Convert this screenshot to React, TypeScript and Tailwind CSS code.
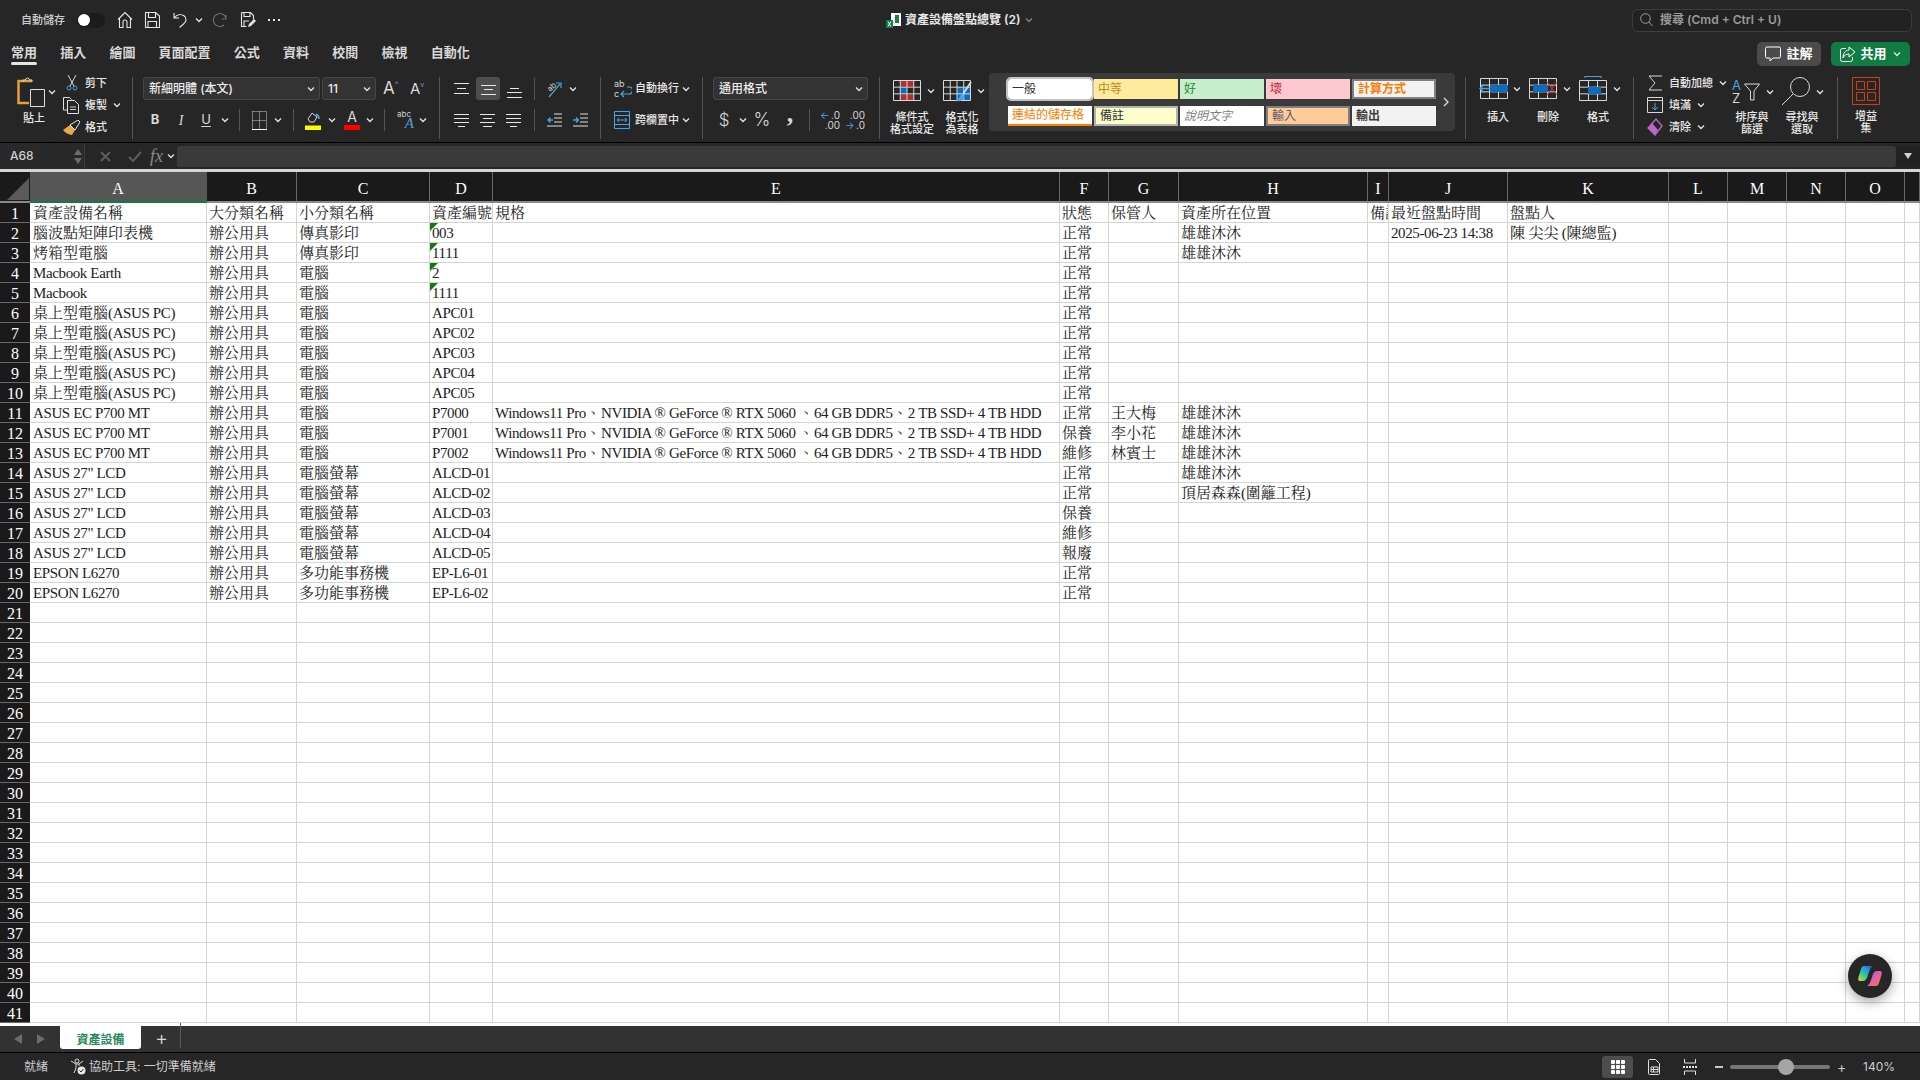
import type { ReactNode } from 'react';

const columns = ['A', 'B', 'C', 'D', 'E', 'F', 'G', 'H', 'I', 'J', 'K', 'L', 'M', 'N', 'O', ''];

const spec = 'Windows11 Pro、NVIDIA ® GeForce ® RTX 5060 、64 GB DDR5、2 TB SSD+ 4 TB HDD';

const rows: string[][] = [
  ['資產設備名稱', '大分類名稱', '小分類名稱', '資產編號', '規格', '狀態', '保管人', '資產所在位置', '備註', '最近盤點時間', '盤點人'],
  ['腦波點矩陣印表機', '辦公用具', '傳真影印', '003', '', '正常', '', '雄雄沐沐', '', '2025-06-23 14:38', '陳 尖尖 (陳總監)'],
  ['烤箱型電腦', '辦公用具', '傳真影印', '1111', '', '正常', '', '雄雄沐沐'],
  ['Macbook Earth', '辦公用具', '電腦', '2', '', '正常'],
  ['Macbook', '辦公用具', '電腦', '1111', '', '正常'],
  ['桌上型電腦(ASUS PC)', '辦公用具', '電腦', 'APC01', '', '正常'],
  ['桌上型電腦(ASUS PC)', '辦公用具', '電腦', 'APC02', '', '正常'],
  ['桌上型電腦(ASUS PC)', '辦公用具', '電腦', 'APC03', '', '正常'],
  ['桌上型電腦(ASUS PC)', '辦公用具', '電腦', 'APC04', '', '正常'],
  ['桌上型電腦(ASUS PC)', '辦公用具', '電腦', 'APC05', '', '正常'],
  ['ASUS EC P700 MT', '辦公用具', '電腦', 'P7000', spec, '正常', '王大梅', '雄雄沐沐'],
  ['ASUS EC P700 MT', '辦公用具', '電腦', 'P7001', spec, '保養', '李小花', '雄雄沐沐'],
  ['ASUS EC P700 MT', '辦公用具', '電腦', 'P7002', spec, '維修', '林賓士', '雄雄沐沐'],
  ['ASUS 27" LCD', '辦公用具', '電腦螢幕', 'ALCD-01', '', '正常', '', '雄雄沐沐'],
  ['ASUS 27" LCD', '辦公用具', '電腦螢幕', 'ALCD-02', '', '正常', '', '頂居森森(圍籬工程)'],
  ['ASUS 27" LCD', '辦公用具', '電腦螢幕', 'ALCD-03', '', '保養'],
  ['ASUS 27" LCD', '辦公用具', '電腦螢幕', 'ALCD-04', '', '維修'],
  ['ASUS 27" LCD', '辦公用具', '電腦螢幕', 'ALCD-05', '', '報廢'],
  ['EPSON L6270', '辦公用具', '多功能事務機', 'EP-L6-01', '', '正常'],
  ['EPSON L6270', '辦公用具', '多功能事務機', 'EP-L6-02', '', '正常'],
];

const tabs = ['常用', '插入', '繪圖', '頁面配置', '公式', '資料', '校閱', '檢視', '自動化'];

function Chev({ className = '' }: { className?: string }) {
  return (
    <svg width="8" height="6" viewBox="0 0 8 6" className={`shrink-0 ${className}`} fill="none" stroke="#e0e0e0" strokeWidth="1.4">
      <path d="M1 1.5l3 3 3-3" />
    </svg>
  );
}

function GroupSep() {
  return <div className="mt-[11px] h-[62px] w-px shrink-0 bg-[#555555]" />;
}

function MiniSep() {
  return <div className="h-[22px] w-px shrink-0 bg-[#555555]" />;
}

function Icon({ w, h, children, className = '' }: { w: number; h: number; children: ReactNode; className?: string }) {
  return (
    <svg width={w} height={h} viewBox={`0 0 ${w} ${h}`} fill="none" className={`shrink-0 ${className}`}>
      {children}
    </svg>
  );
}

function Lines({ y, x = [0, 0, 0], className = '' }: { y: number[]; x?: number[]; className?: string }) {
  return (
    <Icon w={15} h={22} className={className}>
      {y.map((v, i) => (
        <path key={v} d={`M${x[i]} ${v}.5H${15 - x[i]}`} stroke="#e6e6e6" />
      ))}
    </Icon>
  );
}

function TableIcon({ w, h, cols, rowsN }: { w: number; h: number; cols: number; rowsN: number }) {
  const parts = [];
  for (let i = 0; i <= cols; i++) parts.push(`M${0.5 + ((w - 1) * i) / cols} 0.5V${h - 0.5}`);
  for (let i = 0; i <= rowsN; i++) parts.push(`M0.5 ${0.5 + ((h - 1) * i) / rowsN}H${w - 0.5}`);
  return <path d={parts.join('')} stroke="#d8d8d8" />;
}

function Dropdown({ label, className }: { label: string; className: string }) {
  return (
    <div className={`flex h-[23px] items-center justify-between rounded-[3px] border border-[#474747] bg-[#333333] pl-[5px] pr-[4px] text-[12px] font-medium text-[#ececec] ${className}`}>
      <span>{label}</span>
      <Chev />
    </div>
  );
}

function StyleCell({ className, children }: { className: string; children: string }) {
  return <div className={`flex h-[20px] items-center overflow-hidden whitespace-nowrap pl-[4px] text-[12px] leading-none ${className}`}>{children}</div>;
}

function SmallBtn({ icon, label, chev, labelW }: { icon: ReactNode; label: string; chev?: boolean; labelW?: string }) {
  return (
    <div className="flex h-[22px] items-center">
      <div className="flex w-[22px] shrink-0 items-center justify-start">{icon}</div>
      <span className={`text-[11px] font-medium text-[#e8e8e8] ${labelW ?? ''}`}>{label}</span>
      {chev && <Chev className="ml-[6px]" />}
    </div>
  );
}

function TitleBar() {
  return (
    <div className="flex h-[40px] shrink-0 items-center">
      <span className="ml-[21px] w-[44px] text-[11px] font-medium text-[#cfcfcf]">自動儲存</span>
      <div className="ml-[12px] flex h-[15px] w-[28px] items-center rounded-full bg-[#1c1c1c] pl-[1px]">
        <div className="h-[12px] w-[12px] rounded-full bg-white" />
      </div>
      <Icon w={16} h={18} className="ml-[12px]">
        <path d="M1 8.5L8 1.5l7 7M2.5 7v9.5h3.5v-5.5a2 2 0 014 0v5.5h3.5V7" stroke="#e6e6e6" strokeWidth="1.1" />
      </Icon>
      <Icon w={16} h={16} className="ml-[11px]">
        <path d="M1.5.5h10l4 3.5v11.5h-14zM4.5.5v5h7v-5M4 15.5v-6h8.500v6" stroke="#e6e6e6" strokeWidth="1.1" />
      </Icon>
      <Icon w={15} h={18} className="ml-[13px]">
        <path d="M1 2v5h5M1.500 6.500C4 3.500 8 3 11 4.800c3 2.200 2.500 6-.5 8.200l-4 3.500" stroke="#e6e6e6" strokeWidth="1.1" />
      </Icon>
      <Chev className="ml-[7px]" />
      <Icon w={16} h={16} className="ml-[9px]">
        <path d="M14 3v4h-4M14 6A6.500 6.500 0 1012 13" stroke="#6e6e6e" strokeWidth="1.100" />
      </Icon>
      <Icon w={16} h={18} className="ml-[12px]">
        <path d="M1.500 1.500h9l3 3v4M4 1.500v4h6v-4M1.500 1.500v14h5M4 15v-5h5" stroke="#e6e6e6" strokeWidth="1.1" />
        <path d="M8 16l1-3 5-5 2 2-5 5z" fill="#e6e6e6" />
      </Icon>
      <div className="ml-[12px] flex gap-[3px]">
        <div className="h-[2px] w-[2px] bg-[#e6e6e6]" />
        <div className="h-[2px] w-[2px] bg-[#e6e6e6]" />
        <div className="h-[2px] w-[2px] bg-[#e6e6e6]" />
      </div>
      <Icon w={15} h={16} className="ml-[606px]">
        <path d="M5 1h10v13H5z" fill="#ffffff" />
        <path d="M9 3h4v4h-4zM9 7h4v4h-4z" fill="#1e7d45" />
        <path d="M0 8h7v8H0z" fill="#107c41" />
        <path d="M2 9.500l3 5M5 9.500l-3 5" stroke="#fff" />
      </Icon>
      <span className="ml-[4px] text-[12px] font-semibold text-[#e8e8e8]">資產設備盤點總覽 (2)</span>
      <Chev className="ml-[5px] opacity-50" />
      <div className="ml-auto mr-[8px] flex h-[23px] w-[280px] items-center rounded-[6px] border border-[#3d3d3d] bg-[#222222] pl-[7px]">
        <Icon w={13} h={14}>
          <circle cx="5.500" cy="5.500" r="4.800" stroke="#a0a0a0" />
          <path d="M9 9l3.500 4" stroke="#a0a0a0" />
        </Icon>
        <span className="ml-[7px] text-[12px] font-semibold text-[#9a9a9a]">搜尋 (Cmd + Ctrl + U)</span>
      </div>
    </div>
  );
}

function TabRow() {
  return (
    <div className="flex h-[26px] shrink-0">
      <div className="flex gap-[23.2px] pl-[11px]">
        {tabs.map((t, i) => (
          <div key={t} className="relative h-[26px] text-[13px] font-semibold leading-[24px] text-[#d8d8d8]">
            {t}
            {i === 0 && <div className="absolute bottom-[1px] left-0 h-[3px] w-full rounded-full bg-[#e4e4e4]" />}
          </div>
        ))}
      </div>
      <div className="ml-auto mr-[10px] mt-[2px] flex gap-[10px]">
        <div className="flex h-[24px] w-[64px] items-center justify-center rounded-[5px] bg-[#4b4b4b] text-[13px] font-semibold text-white">
          <Icon w={16} h={16} className="mr-[5px]">
            <path d="M2 1h12a1.500 1.500 0 011.500 1.500v8A1.500 1.500 0 0114 12H8l-3 3v-3H2A1.500 1.500 0 01.500 10.500v-8A1.500 1.500 0 012 1z" stroke="#fff" />
          </Icon>
          註解
        </div>
        <div className="flex h-[24px] w-[79px] items-center justify-center rounded-[5px] bg-[#107c41] text-[13px] font-semibold text-white">
          <Icon w={16} h={16} className="mr-[4px]">
            <path d="M9 1l6 5-6 5V8C6 8 4 9.500 3 12 3 7.500 5 4.500 9 4zM6 2.500H2.500a2 2 0 00-2 2v9a2 2 0 002 2h8a2 2 0 002-2V11" stroke="#fff" />
          </Icon>
          共用
          <Chev className="ml-[6px]" />
        </div>
      </div>
    </div>
  );
}

function ClipboardGroup() {
  return (
    <div className="flex w-[132px] shrink-0 items-start">
      <div className="ml-[17px] w-[46px] pt-[11px]">
        <div className="flex items-center">
          <Icon w={28} h={30}>
            <path d="M15 4H1.500v22H12" stroke="#e8a033" strokeWidth="2.500" />
            <path d="M6 5V3h2.500a2 2 0 014 0H15v2" stroke="#cfcfcf" />
            <path d="M13.500 12.500h14v17h-14z" stroke="#e0e0e0" />
          </Icon>
          <Chev className="ml-[3px]" />
        </div>
        <div className="ml-[6px] mt-[3px] text-[11px] font-medium text-[#e8e8e8]">貼上</div>
      </div>
      <div className="pt-[6px]">
        <SmallBtn
          label="剪下"
          icon={
            <Icon w={12} h={16} className="ml-[3px]">
              <path d="M2 0l6 11M10 0L4 11" stroke="#d8d8d8" />
              <circle cx="3" cy="13" r="2" stroke="#4aa3df" />
              <circle cx="9" cy="13" r="2" stroke="#4aa3df" />
            </Icon>
          }
        />
        <SmallBtn
          label="複製"
          chev
          icon={
            <Icon w={17} h={17}>
              <path d="M4 13H.500V.500h6l2 2M4.500 3.500h7l4 4v9h-11z" stroke="#e0e0e0" />
              <path d="M7 10h6M7 12.500h6" stroke="#d0d0d0" />
            </Icon>
          }
        />
        <SmallBtn
          label="格式"
          icon={
            <Icon w={17} h={15}>
              <path d="M0 10l7-5 5 5-3 5c-3-.5-7-2-9-5z" fill="#e8a845" />
              <path d="M7 5l8-5 2 2-5 8z" stroke="#e8e8e8" />
            </Icon>
          }
        />
      </div>
    </div>
  );
}

function FontGroup() {
  return (
    <div className="w-[306px] shrink-0 pt-[11px]">
      <div className="flex items-center">
        <Dropdown label="新細明體 (本文)" className="ml-[10px] w-[177px]" />
        <Dropdown label="11" className="ml-[2px] w-[54px]" />
        <div className="ml-[7px] w-[16px] text-[17px] leading-none text-[#d8d8d8]">A<span className="align-top text-[8px] text-[#5aa9e6]">^</span></div>
        <div className="ml-[11px] w-[15px] text-[15px] leading-none text-[#d8d8d8]">A<span className="align-top text-[7px] text-[#5aa9e6]">v</span></div>
      </div>
      <div className="mt-[8px] flex h-[24px] items-center text-[#d8d8d8]">
        <span className="ml-[14px] w-[16px] text-center text-[13px] font-bold">B</span>
        <span className="ml-[10px] w-[16px] text-center font-['Liberation_Serif',serif] text-[14px] italic">I</span>
        <span className="ml-[9px] w-[16px] text-center text-[13px] underline underline-offset-2">U</span>
        <Chev className="ml-[7px]" />
        <div className="ml-[10px]"><MiniSep /></div>
        <Icon w={15} h={19} className="ml-[12px]">
          <path d="M.5 .5h14M.5 9.500h14M7.500 .5v18M.5 .5v18M14.500 .5v18" stroke="#cfcfcf" strokeDasharray="1 1" />
          <path d="M0 18.500h15" stroke="#ffffff" />
        </Icon>
        <Chev className="ml-[7px]" />
        <div className="ml-[11px]"><MiniSep /></div>
        <Icon w={16} h={20} className="ml-[11px]">
          <path d="M3 9l4-6 5 4-3 5H5z" stroke="#d8d8d8" />
          <path d="M11 4c2 1 3 3 3 5" stroke="#5aa9e6" strokeWidth="1.500" />
          <path d="M0 15.500h16V20H0z" fill="#ffff00" />
        </Icon>
        <Chev className="ml-[7px]" />
        <div className="ml-[8px] flex w-[16px] flex-col items-center">
          <span className="text-[14px] leading-[14px]">A</span>
          <div className="mt-[1px] h-[5px] w-full bg-[#ff0000]" />
        </div>
        <Chev className="ml-[6px]" />
        <div className="ml-[10px]"><MiniSep /></div>
        <div className="relative ml-[12px] h-[20px] w-[17px]">
          <span className="absolute left-0 top-0 text-[8px] leading-none text-[#cfcfcf]">abc</span>
          <span className="absolute bottom-[-1px] right-0 font-['Liberation_Serif',serif] text-[15px] italic leading-none text-[#4aa3df]">A</span>
        </div>
        <Chev className="ml-[5px]" />
      </div>
    </div>
  );
}

function AlignGroup() {
  return (
    <div className="w-[160px] shrink-0 pt-[11px]">
      <div className="flex h-[23px] items-center">
        <Lines y={[5, 10, 15]} x={[0, 3, 0]} className="ml-[14px]" />
        <div className="ml-[7px] flex h-[23px] w-[24px] items-center justify-center rounded-[3px] bg-[#4d4d4d]">
          <Lines y={[7, 11, 16]} x={[0, 3, 0]} />
        </div>
        <Lines y={[10, 14, 19]} x={[3, 0, 0]} className="ml-[7px]" />
        <div className="ml-[12px]"><MiniSep /></div>
        <Icon w={18} h={20} className="ml-[11px]">
          <path d="M3 18L14 5" stroke="#4aa3df" strokeWidth="1.200" />
          <path d="M10 4h5v5" stroke="#4aa3df" strokeWidth="1.200" />
          <text x="1" y="11" fontSize="8" fill="#d8d8d8" transform="rotate(-42 5 8)">ab</text>
        </Icon>
        <Chev className="ml-[5px]" />
      </div>
      <div className="mt-[8px] flex h-[24px] items-center">
        <Lines y={[5, 9, 13, 17]} x={[0, 0, 0, 4]} className="ml-[14px]" />
        <Lines y={[5, 9, 13, 17]} x={[0, 3, 0, 3]} className="ml-[11px]" />
        <Lines y={[5, 9, 13, 17]} x={[0, 0, 0, 4]} className="ml-[11px]" />
        <div className="ml-[13px]"><MiniSep /></div>
        <Icon w={15} h={16} className="ml-[12px]">
          <path d="M7 2h8M7 6h8M7 10h8M0 14h15" stroke="#e0e0e0" />
          <path d="M6 8H1M3.500 5.500L1 8l2.500 2.500" stroke="#4aa3df" strokeWidth="1.300" />
        </Icon>
        <Icon w={15} h={16} className="ml-[11px]">
          <path d="M7 2h8M7 6h8M7 10h8M0 14h15" stroke="#e0e0e0" />
          <path d="M0 8h5M3 5.500L5.500 8 3 10.500" stroke="#4aa3df" strokeWidth="1.300" />
        </Icon>
      </div>
    </div>
  );
}

function WrapGroup() {
  return (
    <div className="w-[101px] shrink-0 pt-[11px]">
      <div className="flex h-[23px] items-center">
        <Icon w={18} h={20} className="ml-[13px]">
          <text x="0" y="8" fontSize="9" fill="#d8d8d8">ab</text>
          <text x="0" y="18" fontSize="9" fill="#d8d8d8">c</text>
          <path d="M13 8h2a2.500 2.500 0 010 7H7M10 12l-3 3 3 3" stroke="#4aa3df" strokeWidth="1.200" />
        </Icon>
        <span className="ml-[3px] w-[44px] text-[11px] font-medium text-[#e8e8e8]">自動換行</span>
        <Chev className="ml-[3px]" />
      </div>
      <div className="mt-[8px] flex h-[24px] items-center">
        <Icon w={18} h={18} className="ml-[13px]">
          <path d="M.5 .5h15v17H.5zM.5 4.500h15M.5 13.500h15" stroke="#4aa3df" />
          <path d="M3 9h10M5 7L3 9l2 2M11 7l2 2-2 2" stroke="#4aa3df" />
        </Icon>
        <span className="ml-[3px] w-[44px] text-[11px] font-medium text-[#e8e8e8]">跨欄置中</span>
        <Chev className="ml-[3px]" />
      </div>
    </div>
  );
}

function NumberGroup() {
  return (
    <div className="w-[176px] shrink-0 pt-[11px]">
      <Dropdown label="通用格式" className="ml-[10px] w-[155px]" />
      <div className="mt-[8px] flex h-[24px] items-center text-[#d8d8d8]">
        <span className="ml-[15px] w-[12px] text-center text-[17px] font-light leading-none">$</span>
        <Chev className="ml-[9px]" />
        <span className="ml-[6px] w-[18px] text-center text-[18px] font-light leading-none">%</span>
        <span className="ml-[14px] mt-[-12px] w-[10px] text-center font-['Liberation_Serif',serif] text-[26px] font-bold leading-[18px]">,</span>
        <div className="ml-[14px]"><MiniSep /></div>
        <div className="ml-[10px] flex w-[20px] flex-col text-[10px] leading-[10px]">
          <div className="flex justify-between"><span className="text-[#4aa3df]">←</span><span>.0</span></div>
          <div className="text-right">.00</div>
        </div>
        <div className="ml-[5px] flex w-[20px] flex-col text-[10px] leading-[10px]">
          <div className="text-right">.00</div>
          <div className="flex justify-between"><span className="text-[#4aa3df]">→</span><span>.0</span></div>
        </div>
      </div>
    </div>
  );
}

function Label({ className, children }: { className: string; children: ReactNode }) {
  return <div className={`shrink-0 text-center text-[11px] font-medium leading-[12px] text-[#e8e8e8] ${className}`}>{children}</div>;
}

function CondGroup() {
  return (
    <div className="w-[109px] shrink-0 pt-[14px]">
      <div className="flex h-[21px] items-center">
        <Icon w={28} h={21} className="ml-[13px]">
          <path d="M7 0.500h14v6H7zM7 14.500h14v6H7z" fill="#b03030" />
          <path d="M7 7h7v7H7z" fill="#0f6cbd" />
          <TableIcon w={28} h={21} cols={4} rowsN={3} />
        </Icon>
        <Chev className="ml-[6px]" />
        <Icon w={29} h={22} className="ml-[8px]">
          <path d="M14 7h14v14H14z" fill="#0f6cbd" />
          <TableIcon w={28} h={21} cols={4} rowsN={3} />
          <path d="M28 2L20 14" stroke="#d8d8d8" strokeWidth="2" />
          <path d="M19 13c-2 2-2 5-6 8 3 1 7 0 8-5z" fill="#4aa3df" />
        </Icon>
        <Chev className="ml-[5px]" />
      </div>
      <div className="mt-[10px] flex">
        <Label className="ml-[7px] w-[50px]">條件式<br />格式設定</Label>
        <Label className="w-[50px]">格式化<br />為表格</Label>
      </div>
    </div>
  );
}

function StyleGallery() {
  return (
    <div className="mt-[7px] flex h-[58px] w-[466px] shrink-0 items-center rounded-[4px] bg-[#3a3a3a] pl-[19px]">
      <div className="grid grid-cols-[84px_84px_84px_84px_84px] gap-x-[2px] gap-y-[7px]">
        <StyleCell className="rounded-[3px] bg-white text-[#333333] outline outline-2 outline-[#c4c4c4]">一般</StyleCell>
        <StyleCell className="bg-[#ffeb9c] text-[#c08a1e]">中等</StyleCell>
        <StyleCell className="bg-[#c6efce] text-[#2a8a3a]">好</StyleCell>
        <StyleCell className="bg-[#ffc7ce] text-[#b8283c]">壞</StyleCell>
        <StyleCell className="border-2 border-[#7f7f7f] bg-[#f2f2f2] font-bold text-[#fa7d00]">計算方式</StyleCell>
        <StyleCell className="border-b-2 border-[#ff8001] bg-white text-[#fa7d00]">連結的儲存格</StyleCell>
        <StyleCell className="border-2 border-[#b2b2b2] bg-[#ffffcc] text-[#333333]">備註</StyleCell>
        <StyleCell className="bg-white italic text-[#7f7f7f]">說明文字</StyleCell>
        <StyleCell className="border-2 border-[#7f7f7f] bg-[#ffcc99] text-[#5a5a76]">輸入</StyleCell>
        <StyleCell className="bg-[#f2f2f2] font-bold text-[#3f3f3f]">輸出</StyleCell>
      </div>
      <Icon w={6} h={10} className="ml-[7px]">
        <path d="M1 1l4 4-4 4" stroke="#e0e0e0" strokeWidth="1.300" />
      </Icon>
    </div>
  );
}

function CellsGroup() {
  return (
    <div className="w-[167px] shrink-0 pt-[10px]">
      <div className="flex h-[25px] items-center">
        <Icon w={30} h={21} className="ml-[13px]">
          <g transform="translate(1 0)"><TableIcon w={28} h={21} cols={3} rowsN={3} /></g>
          <path d="M11 7h18v7H11z" fill="#0f6cbd" />
          <path d="M11 10.500H1M5 6.500l-4 4 4 4" stroke="#4aa3df" strokeWidth="1.300" />
        </Icon>
        <Chev className="ml-[4px]" />
        <Icon w={29} h={21} className="ml-[8px]">
          <TableIcon w={28} h={21} cols={3} rowsN={3} />
          <path d="M4 7h15v7H4z" fill="#0f6cbd" />
          <path d="M18 4l10 13M28 4L18 17" stroke="#d13438" strokeWidth="1.200" />
        </Icon>
        <Chev className="ml-[5px]" />
        <Icon w={28} h={25} className="ml-[8px]">
          <path d="M6 .5h16M6 0v2M22 0v2" stroke="#4aa3df" />
          <g transform="translate(0 4)"><TableIcon w={28} h={21} cols={3} rowsN={3} /></g>
          <path d="M9 11h13v7H9z" fill="#0f6cbd" />
        </Icon>
        <Chev className="ml-[6px]" />
      </div>
      <div className="mt-[10px] flex">
        <Label className="ml-[7px] w-[50px]">插入</Label>
        <Label className="w-[50px]">刪除</Label>
        <Label className="w-[50px]">格式</Label>
      </div>
    </div>
  );
}

function EditingGroup() {
  return (
    <div className="flex w-[203px] shrink-0 items-start">
      <div className="ml-[13px] w-[85px] pt-[6px]">
        <SmallBtn
          label="自動加總"
          chev
          icon={
            <Icon w={16} h={16}>
              <path d="M15 1H2l6 7-6 7h13" stroke="#d8d8d8" />
            </Icon>
          }
        />
        <SmallBtn
          label="填滿"
          chev
          icon={
            <Icon w={16} h={16}>
              <path d="M.5 .5h15v15H.5zM.5 3.500h15" stroke="#d8d8d8" />
              <path d="M8 6v7M5 10l3 3 3-3" stroke="#4aa3df" />
            </Icon>
          }
        />
        <SmallBtn
          label="清除"
          chev
          icon={
            <Icon w={16} h={18}>
              <path d="M9 1l6 7-7 9-7-7z" stroke="#b868c8" strokeWidth="1.300" />
              <path d="M5 5l6 7-3 5-7-7z" fill="#b868c8" />
            </Icon>
          }
        />
      </div>
      <div className="pt-[11px]">
        <div className="flex h-[29px] items-center">
          <div className="flex w-[29px] items-center">
            <div className="flex w-[11px] flex-col text-[13px] leading-[13px]">
              <span className="text-[#4aa3df]">A</span>
              <span className="text-[#d8d8d8]">Z</span>
            </div>
            <Icon w={17} h={20} className="ml-[1px]">
              <path d="M.5 2h15l-5.500 7v9H6.500V9z" stroke="#d8d8d8" />
            </Icon>
          </div>
          <Chev className="ml-[5px]" />
          <Icon w={30} h={29} className="ml-[7px]">
            <circle cx="19" cy="10" r="9.500" stroke="#d8d8d8" />
            <path d="M12 17L1 28" stroke="#d8d8d8" />
          </Icon>
          <Chev className="ml-[5px]" />
        </div>
        <div className="ml-[-5px] mt-[5px] flex">
          <Label className="w-[50px]">排序與<br />篩選</Label>
          <Label className="w-[50px]">尋找與<br />選取</Label>
        </div>
      </div>
    </div>
  );
}

function AddinGroup() {
  return (
    <div className="ml-[14px] pt-[11px]">
      <Icon w={28} h={28}>
        <path d="M.5 .5h27v27H.5z" stroke="#c8401c" />
        <path d="M4.500 4.500h8v8h-8zM15.500 4.500h8v8h-8zM4.500 15.500h8v8h-8zM15.500 15.500h8v8h-8z" stroke="#c8401c" />
      </Icon>
      <Label className="ml-[-11px] mt-[5px] w-[50px]">增益<br />集</Label>
    </div>
  );
}

function Ribbon() {
  return (
    <div className="flex h-[76px] shrink-0 items-start">
      <ClipboardGroup />
      <GroupSep />
      <FontGroup />
      <GroupSep />
      <AlignGroup />
      <GroupSep />
      <WrapGroup />
      <GroupSep />
      <NumberGroup />
      <GroupSep />
      <CondGroup />
      <StyleGallery />
      <div className="ml-[10px]"><GroupSep /></div>
      <CellsGroup />
      <GroupSep />
      <EditingGroup />
      <GroupSep />
      <AddinGroup />
    </div>
  );
}

function FormulaBar() {
  return (
    <div className="flex h-[26px] shrink-0 items-center bg-[#262626]">
      <div className="flex h-[25px] w-[85px] items-center justify-between border-r border-[#3d3d3d] bg-[#292929] pl-[10px] pr-[2px] text-[12px] font-medium text-[#d0d0d0]">
        A68
        <div className="flex flex-col gap-[3px]">
          <div className="h-0 w-0 border-x-[4px] border-b-[6px] border-x-transparent border-b-[#6e6e6e]" />
          <div className="h-0 w-0 border-x-[4px] border-t-[6px] border-x-transparent border-t-[#6e6e6e]" />
        </div>
      </div>
      <Icon w={11} h={11} className="ml-[15px]">
        <path d="M1 1l9 9M10 1l-9 9" stroke="#5c5c5c" strokeWidth="2" />
      </Icon>
      <Icon w={14} h={11} className="ml-[17px]">
        <path d="M1 6l4 4 8-9" stroke="#5c5c5c" strokeWidth="2" />
      </Icon>
      <span className="ml-[8px] w-[17px] font-['Liberation_Serif',serif] text-[18px] italic leading-none text-[#8a8a8a]">fx</span>
      <Chev />
      <div className="ml-[2px] h-[21px] flex-1 rounded-[3px] bg-[#3a3a3a]" />
      <div className="flex h-[21px] w-[24px] items-center justify-center bg-[#222222]">
        <div className="h-0 w-0 border-x-[4px] border-t-[6px] border-x-transparent border-t-[#d0d0d0]" />
      </div>
    </div>
  );
}

// latin runs sit narrower than the CJK ones in the reference, so they get their own tracking
function CellText({ text }: { text: string }) {
  const parts = text.split(/([\u3000-\u9fff\uff00-\uffef]+)/);
  return (
    <>
      {parts.map((p, i) =>
        i % 2 === 1 ? (
          <span key={i}>{p}</span>
        ) : (
          <span key={i} className="tracking-[-0.38px]">
            {p}
          </span>
        ),
      )}
    </>
  );
}

function Sheet() {
  return (
    <div className="min-h-0 flex-1 overflow-hidden bg-white font-['Liberation_Serif','Noto_Serif_CJK_TC','Noto_Sans_CJK_TC',serif]">
      <div className="grid grid-cols-[30px_177px_90px_133px_63px_567px_49px_70px_189px_21px_119px_161px_59px_59px_59px_59px_15px]">
        <div className="relative h-[31px] border-b-2 border-[#8a8a8a] bg-[#1a1a1a]">
          <div className="absolute bottom-[1px] right-[1px] h-0 w-0 border-b-[22px] border-l-[22px] border-b-[#5a5a5a] border-l-transparent" />
        </div>
        {columns.map((c, i) => (
          <div
            key={`${c}-${i}`}
            className={`flex h-[31px] items-center justify-center border-b-2 border-r pt-[5px] text-[16px] text-white ${i === 0 ? 'border-b-[#107c41] border-r-[#565656] bg-[#565656]' : 'border-b-[#8a8a8a] border-r-[#6a6a6a] bg-[#1a1a1a]'}`}
          >
            {c}
          </div>
        ))}
        {Array.from({ length: 41 }, (_, r) => (
          <div key={r} className="contents">
            <div className="flex h-[20px] items-center justify-center border-b border-[#6a6a6a] bg-[#1a1a1a] pt-[3px] text-[16px] text-white">{r + 1}</div>
            {columns.map((_c, c) => (
              <div key={c} className={`relative h-[20px] overflow-hidden whitespace-pre border-b border-r border-[#d4d4d4] text-[15px] leading-[21px] text-[#222222] ${c === 0 ? 'pl-[3px]' : 'pl-[2px]'}`}>
                {r >= 1 && r <= 4 && c === 3 && <div className="absolute left-0 top-0 h-0 w-0 border-r-[8px] border-t-[8px] border-r-transparent border-t-[#107c10]" />}
                <CellText text={rows[r]?.[c] ?? ''} />
              </div>
            ))}
          </div>
        ))}
      </div>
    </div>
  );
}

function SheetTabs() {
  return (
    <div className="flex h-[26px] shrink-0 items-start bg-[#323232]">
      <div className="ml-[14px] mt-[8px] h-0 w-0 border-y-[5px] border-r-[8px] border-y-transparent border-r-[#6b6b6b]" />
      <div className="ml-[15px] mt-[8px] h-0 w-0 border-y-[5px] border-l-[8px] border-y-transparent border-l-[#6b6b6b]" />
      <div className="ml-[15px] mt-[-3px] flex h-[26px] w-[81px] items-end justify-center rounded-b-[3px] bg-white text-[12px] font-semibold text-[#2a8a5a]">資產設備</div>
      <div className="ml-[14px] mt-[2px] text-[20px] font-light leading-[20px] text-[#d8d8d8]">+</div>
      <div className="ml-[12px] mt-[-3px] h-[25px] w-px bg-[#5a5a5a]" />
    </div>
  );
}

function StatusBar() {
  return (
    <div className="flex h-[28px] shrink-0 items-center border-t border-black bg-[#262626] text-[12px] text-[#cccccc]">
      <span className="ml-[24px]">就緒</span>
      <Icon w={16} h={17} className="ml-[22px]">
        <circle cx="7" cy="3" r="2" stroke="#d8d8d8" />
        <path d="M1 3l5 3h3l4-3M6 6v4l-2 5M9 6v2" stroke="#d8d8d8" />
        <circle cx="11.500" cy="12.500" r="4" fill="#e8e8e8" />
        <path d="M9.500 12.500l1.500 1.500 2.500-3" stroke="#262626" />
      </Icon>
      <span className="ml-[3px]">協助工具: 一切準備就緒</span>
      <div className="ml-auto flex h-[22px] w-[31px] items-center justify-center rounded-[3px] bg-[#4d4d4d]">
        <div className="grid grid-cols-[4px_4px_4px] gap-[1px]">
          {Array.from({ length: 9 }, (_, i) => (
            <div key={i} className="h-[4px] rounded-[1px] bg-white" />
          ))}
        </div>
      </div>
      <Icon w={12} h={16} className="ml-[15px]">
        <path d="M.5 1.500a1 1 0 011-1h6l4 4v10a1 1 0 01-1 1h-9a1 1 0 01-1-1z" stroke="#e0e0e0" />
        <path d="M3 8h7v5H3zM3 10.500h7M5.500 8v5" stroke="#e0e0e0" />
      </Icon>
      <Icon w={14} h={16} className="ml-[23px]">
        <path d="M1.500 0v4h11V0M1.500 16v-4h11v4" stroke="#e0e0e0" />
        <path d="M0 8h14" stroke="#e0e0e0" strokeWidth="2" strokeDasharray="2 1" />
      </Icon>
      <div className="ml-[18px] h-[2px] w-[8px] bg-[#c8c8c8]" />
      <div className="relative ml-[7px] h-[4px] w-[100px] rounded-full bg-[#757575]">
        <div className="absolute left-[48px] top-[-6px] h-[16px] w-[16px] rounded-full bg-[#a5a5a5]" />
      </div>
      <span className="ml-[7px] w-[8px] text-center text-[14px] leading-none">+</span>
      <span className="ml-[18px] mr-[26px] w-[31px] whitespace-nowrap text-[12px]">140%</span>
    </div>
  );
}

export default function App() {
  return (
    <div className="relative flex h-[1080px] w-[1920px] flex-col overflow-hidden bg-[#262626] font-['Inter','Noto_Sans_CJK_TC',sans-serif]">
      <TitleBar />
      <TabRow />
      <Ribbon />
      <div className="h-px shrink-0 bg-black" />
      <FormulaBar />
      <div className="h-[3px] shrink-0 bg-[#d4d4d4]" />
      <Sheet />
      <SheetTabs />
      <StatusBar />
      <div className="absolute left-[1848px] top-[954px] flex h-[44px] w-[44px] items-center justify-center rounded-full bg-[#262626] shadow-[0_4px_12px_rgba(0,0,0,0.35)]">
        <svg width="24" height="22" viewBox="0 0 24 22">
          <defs>
            <linearGradient id="cpA" x1="0" y1="1" x2="1" y2="0">
              <stop offset="0" stopColor="#f5d020" />
              <stop offset="0.35" stopColor="#35d08a" />
              <stop offset="0.7" stopColor="#2a8fe8" />
              <stop offset="1" stopColor="#1f4fd0" />
            </linearGradient>
            <linearGradient id="cpB" x1="0" y1="0" x2="1" y2="1">
              <stop offset="0" stopColor="#8a5ce0" />
              <stop offset="0.5" stopColor="#e060b0" />
              <stop offset="1" stopColor="#f57a30" />
            </linearGradient>
          </defs>
          <path d="M6 1h9c-2 1-3 3-4 6l-2 6c-1 2-2 3-4 3H2C0 16 0 14 .5 12L3 4C3.500 2 4.500 1 6 1z" fill="url(#cpA)" />
          <path d="M18 21H9c2-1 3-3 4-6l2-6c1-2 2-3 4-3h3c2 0 2 2 1.500 4L21 18c-.5 2-1.500 3-3 3z" fill="url(#cpB)" />
        </svg>
      </div>
    </div>
  );
}
